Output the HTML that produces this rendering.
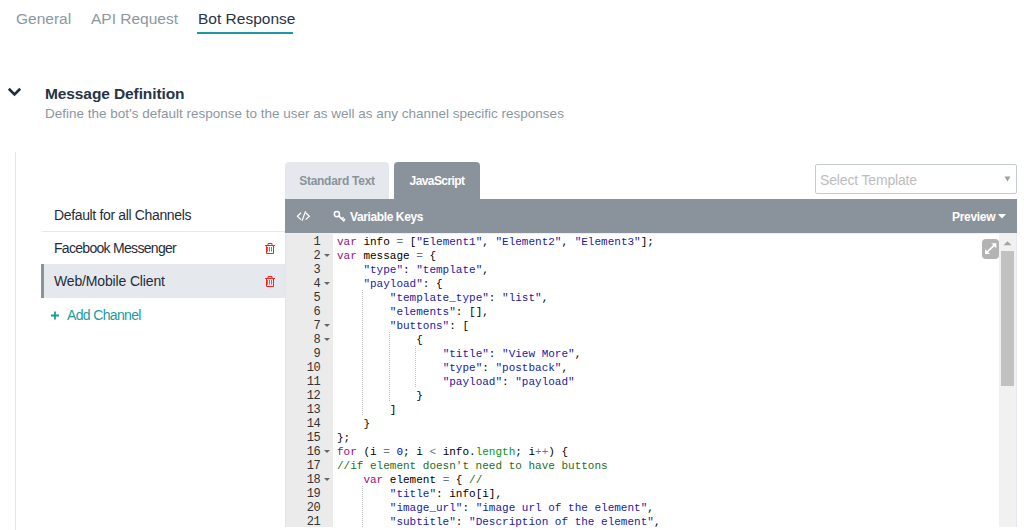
<!DOCTYPE html>
<html><head><meta charset="utf-8">
<style>
*{box-sizing:border-box;margin:0;padding:0}
html,body{width:1024px;height:530px;overflow:hidden;background:#fff;font-family:"Liberation Sans",sans-serif}
.abs{position:absolute;white-space:nowrap}
.tab{font-size:15.5px;color:#8c97a3;line-height:18px}
.tab.act{color:#263445}
.uline{position:absolute;left:197px;top:32px;width:96px;height:2px;background:#1a9ba1}
.title{font-size:15.5px;letter-spacing:-0.1px;font-weight:bold;color:#263445;line-height:18px}
.sub{font-size:13.5px;color:#8c97a3;line-height:16px}
.vline{position:absolute;left:15px;top:152px;width:1px;height:378px;background:#e3e5e9}
.item{font-size:14px;color:#1f2c3b;line-height:16px}
.sep{position:absolute;left:42px;top:231px;width:243px;height:1px;background:#e6e8ec}
.selrow{position:absolute;left:41px;top:264px;width:244px;height:34px;background:#e5e8ec;border-left:3px solid #8a939b}
.add{font-size:14px;color:#1a9ba1;line-height:16px}
.etab{position:absolute;top:162px;height:37px;border-radius:4px 4px 0 0;font-size:12px;font-weight:bold;line-height:39px;text-align:center}
.select{position:absolute;left:815px;top:164px;width:202px;height:30px;border:1px solid #c6cbd3;border-radius:2px}
.toolbar{position:absolute;left:285px;top:199px;width:732px;height:34px;background:#8a939b;color:#fff;font-size:12px;font-weight:bold}
.editor{position:absolute;left:285px;top:233px;width:732px;height:294px;background:#fff;overflow:hidden;border-top:1px solid #eceef0}
.gutter{position:absolute;left:0;top:0;width:48px;height:294px;background:#ebebeb}
.ln{position:absolute;right:13px;letter-spacing:-0.6px;margin-top:1px;font-family:"Liberation Mono",monospace;font-size:12px;color:#333;line-height:14px}
.code{position:absolute;left:52px;top:1px;font-family:"Liberation Mono",monospace;font-size:11px;line-height:14px;color:#000}
.code div{height:14px;white-space:pre}
.k{color:rgb(147,15,128)}
.s{color:#1a1aa6}
.c{color:#236e24}
.n{color:rgb(0,0,205)}
.o{color:rgb(104,118,135)}
.sc{color:rgb(6,150,14)}
.fw{position:absolute;left:39px;width:0;height:0;margin-top:6px;border-left:3px solid transparent;border-right:3px solid transparent;border-top:3.5px solid #666}
.g{position:absolute;width:1px;background-image:linear-gradient(#bdbdbd 50%,transparent 50%);background-size:1px 2px}
</style></head><body>

<div class="abs tab" style="left:16px;top:10px">General</div>
<div class="abs tab" style="left:91px;top:10px">API Request</div>
<div class="abs tab act" style="left:198px;top:10px">Bot Response</div>
<div class="uline"></div>

<svg class="abs" style="left:7px;top:86px" width="16" height="12" viewBox="0 0 16 12"><path d="M1.8 2.8 L7.5 8.4 L13.2 2.8" fill="none" stroke="#1f2d3d" stroke-width="2.6"/></svg>
<div class="abs title" style="left:45px;top:85px">Message Definition</div>
<div class="abs sub" style="left:45px;top:106px">Define the bot's default response to the user as well as any channel specific responses</div>

<div class="vline"></div>

<div class="abs item" style="left:54px;top:207px;letter-spacing:-0.35px">Default for all Channels</div>
<div class="sep"></div>
<div class="abs item" style="left:54px;top:240px;letter-spacing:-0.7px">Facebook Messenger</div>
<svg class="abs" style="left:265px;top:243px" width="10" height="11" viewBox="0 0 10 11"><g fill="none" stroke="#ff2020" stroke-width="1"><path d="M3 2.5 V0.5 H7 V2.5"/><path d="M0 2.5 H10"/><path d="M1.5 2.5 V10.5 H8.5 V2.5"/><path d="M2.5 4 V8.5 M4.5 4 V8.5 M6.5 4 V8.5" stroke="#ff5030"/></g></svg>
<div class="selrow"></div>
<div class="abs item" style="left:54px;top:273px;letter-spacing:-0.15px">Web/Mobile Client</div>
<svg class="abs" style="left:265px;top:276px" width="10" height="11" viewBox="0 0 10 11"><g fill="none" stroke="#ff2020" stroke-width="1"><path d="M3 2.5 V0.5 H7 V2.5"/><path d="M0 2.5 H10"/><path d="M1.5 2.5 V10.5 H8.5 V2.5"/><path d="M2.5 4 V8.5 M4.5 4 V8.5 M6.5 4 V8.5" stroke="#ff5030"/></g></svg>
<svg class="abs" style="left:50px;top:310px" width="10" height="11" viewBox="0 0 10 11"><path d="M1 5.5 H9 M5 1.5 V9.5" stroke="#1a9ba1" stroke-width="1.8"/></svg>
<div class="abs add" style="left:67px;top:307px;letter-spacing:-0.65px">Add Channel</div>

<div class="etab" style="left:285px;width:104px;background:#e5e8ec;color:#8a939b;letter-spacing:-0.27px">Standard Text</div>
<div class="etab" style="left:394px;width:86px;background:#8a939b;color:#fff;letter-spacing:-0.58px">JavaScript</div>

<div class="select"><span class="abs" style="left:4px;top:7px;font-size:14px;color:#bdbdbd;letter-spacing:-0.16px">Select Template</span><svg class="abs" style="left:188px;top:11px" width="7" height="6" viewBox="0 0 7 6"><path d="M0.5 0.5 H6.5 L3.5 5.5 Z" fill="#a0a0a0"/></svg></div>

<div class="toolbar">
  <svg class="abs" style="left:11px;top:11px" width="15" height="13" viewBox="0 0 15 13"><g fill="none" stroke="#fff" stroke-width="1.2"><path d="M5 2.8 L1.4 6.2 L5 9.6"/><path d="M9.6 1.3 L6 10.7"/><path d="M9.6 2.8 L13.4 6.2 L9.6 9.6"/></g></svg>
  <svg class="abs" style="left:47px;top:10px" width="15" height="14" viewBox="0 0 15 14"><g fill="none" stroke="#fff" stroke-width="1.5"><circle cx="4.9" cy="5.1" r="2.6"/><path d="M6.9 7.1 L12.4 12.4 M10 9.9 L11.6 8.3 M11.6 11.5 L13.1 10"/></g></svg>
  <span class="abs" style="left:65px;top:11px;letter-spacing:-0.39px">Variable Keys</span>
  <span class="abs" style="left:667px;top:11px;letter-spacing:-0.3px">Preview</span>
  <svg class="abs" style="left:713px;top:15px" width="8" height="5" viewBox="0 0 8 5"><path d="M0 0 H8 L4 4.5 Z" fill="#fff"/></svg>
</div>

<div class="editor">
  <div class="gutter">
<div class="ln" style="top:0px">1</div>
<div class="ln" style="top:14px">2</div>
<div class="fw" style="top:14px"></div>
<div class="ln" style="top:28px">3</div>
<div class="ln" style="top:42px">4</div>
<div class="fw" style="top:42px"></div>
<div class="ln" style="top:56px">5</div>
<div class="ln" style="top:70px">6</div>
<div class="ln" style="top:84px">7</div>
<div class="fw" style="top:84px"></div>
<div class="ln" style="top:98px">8</div>
<div class="fw" style="top:98px"></div>
<div class="ln" style="top:112px">9</div>
<div class="ln" style="top:126px">10</div>
<div class="ln" style="top:140px">11</div>
<div class="ln" style="top:154px">12</div>
<div class="ln" style="top:168px">13</div>
<div class="ln" style="top:182px">14</div>
<div class="ln" style="top:196px">15</div>
<div class="ln" style="top:210px">16</div>
<div class="fw" style="top:210px"></div>
<div class="ln" style="top:224px">17</div>
<div class="ln" style="top:238px">18</div>
<div class="fw" style="top:238px"></div>
<div class="ln" style="top:252px">19</div>
<div class="ln" style="top:266px">20</div>
<div class="ln" style="top:280px">21</div>
  </div>
  <div class="code">
<div><span class="k">var</span> info <span class="o">=</span> [<span class="s">&quot;Element1&quot;</span>, <span class="s">&quot;Element2&quot;</span>, <span class="s">&quot;Element3&quot;</span>];</div>
<div><span class="k">var</span> message <span class="o">=</span> {</div>
<div>    <span class="s">&quot;type&quot;</span>: <span class="s">&quot;template&quot;</span>,</div>
<div>    <span class="s">&quot;payload&quot;</span>: {</div>
<div>        <span class="s">&quot;template_type&quot;</span>: <span class="s">&quot;list&quot;</span>,</div>
<div>        <span class="s">&quot;elements&quot;</span>: [],</div>
<div>        <span class="s">&quot;buttons&quot;</span>: [</div>
<div>            {</div>
<div>                <span class="s">&quot;title&quot;</span>: <span class="s">&quot;View More&quot;</span>,</div>
<div>                <span class="s">&quot;type&quot;</span>: <span class="s">&quot;postback&quot;</span>,</div>
<div>                <span class="s">&quot;payload&quot;</span>: <span class="s">&quot;payload&quot;</span></div>
<div>            }</div>
<div>        ]</div>
<div>    }</div>
<div>};</div>
<div><span class="k">for</span> (i <span class="o">=</span> <span class="n">0</span>; i <span class="o">&lt;</span> info.<span class="sc">length</span>; i<span class="o">++</span>) {</div>
<div><span class="c">//if element doesn&#x27;t need to have buttons</span></div>
<div>    <span class="k">var</span> element <span class="o">=</span> { <span class="c">//</span></div>
<div>        <span class="s">&quot;title&quot;</span>: info[i],</div>
<div>        <span class="s">&quot;image_url&quot;</span>: <span class="s">&quot;image url of the element&quot;</span>,</div>
<div>        <span class="s">&quot;subtitle&quot;</span>: <span class="s">&quot;Description of the element&quot;</span>,</div>
  </div>
<div class="g" style="left:77.4px;top:56px;height:14px"></div>
<div class="g" style="left:77.4px;top:70px;height:14px"></div>
<div class="g" style="left:77.4px;top:84px;height:14px"></div>
<div class="g" style="left:77.4px;top:98px;height:14px"></div>
<div class="g" style="left:103.8px;top:98px;height:14px"></div>
<div class="g" style="left:77.4px;top:112px;height:14px"></div>
<div class="g" style="left:103.8px;top:112px;height:14px"></div>
<div class="g" style="left:130.2px;top:112px;height:14px"></div>
<div class="g" style="left:77.4px;top:126px;height:14px"></div>
<div class="g" style="left:103.8px;top:126px;height:14px"></div>
<div class="g" style="left:130.2px;top:126px;height:14px"></div>
<div class="g" style="left:77.4px;top:140px;height:14px"></div>
<div class="g" style="left:103.8px;top:140px;height:14px"></div>
<div class="g" style="left:130.2px;top:140px;height:14px"></div>
<div class="g" style="left:77.4px;top:154px;height:14px"></div>
<div class="g" style="left:103.8px;top:154px;height:14px"></div>
<div class="g" style="left:77.4px;top:168px;height:14px"></div>
<div class="g" style="left:77.4px;top:252px;height:14px"></div>
<div class="g" style="left:77.4px;top:266px;height:14px"></div>
<div class="g" style="left:77.4px;top:280px;height:14px"></div>

  <div class="abs" style="left:697px;top:5px;width:17px;height:20px;border-radius:4px;background:#b3b3b3"><svg class="abs" style="left:0;top:0" width="17" height="20" viewBox="0 0 17 20"><g fill="#fff"><path d="M14.3 4.2 L14.3 9.2 L9.3 4.2 Z"/><path d="M3 15.1 L3 10.1 L8 15.1 Z"/></g><path d="M12.3 6.2 L5 13.1" stroke="#fff" stroke-width="1.7"/></svg></div>
  <div class="abs" style="left:714px;top:0;width:17px;height:294px;background:#f1f1f1"></div>
  <svg class="abs" style="left:718px;top:7px" width="9" height="5" viewBox="0 0 9 5"><path d="M0.5 4.2 H8.5 L4.5 0.2 Z" fill="#a3a3a3"/></svg>
  <div class="abs" style="left:716px;top:17px;width:13px;height:135px;background:#c1c1c1"></div>
  <div class="abs" style="left:731px;top:0;width:1px;height:294px;background:#e4e8ee"></div>
  <div class="abs" style="left:0;top:0;width:1px;height:294px;background:#e2e6eb"></div>
</div>

</body></html>
